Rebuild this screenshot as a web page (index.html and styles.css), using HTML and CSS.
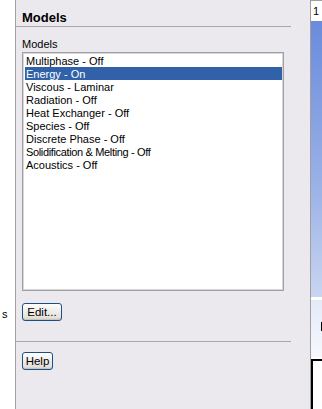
FILE: index.html
```html
<!DOCTYPE html>
<html lang="en">
<head>
  <meta charset="UTF-8">
  <title>Models</title>
  <link rel="stylesheet" href="styles.css">
</head>
<body>
  <div class="side-label">s</div>

  <!-- Models task panel -->
  <div class="panel">
    <h1 class="panel-title">Models</h1>
    <div class="panel-body">
      <div class="field-label">Models</div>
      <ul class="listbox">
        <li>Multiphase - Off</li>
        <li class="selected">Energy - On</li>
        <li>Viscous - Laminar</li>
        <li>Radiation - Off</li>
        <li>Heat Exchanger - Off</li>
        <li>Species - Off</li>
        <li>Discrete Phase - Off</li>
        <li class="tight">Solidification &amp; Melting - Off</li>
        <li>Acoustics - Off</li>
      </ul>
      <button class="xp-button edit-btn">Edit...</button>
    </div>
    <div class="separator"></div>
    <div class="panel-body">
      <button class="xp-button help-btn">Help</button>
    </div>
  </div>

  <!-- edge of the graphics window -->
  <div class="graphics">
    <div class="tab">1</div>
    <div class="sky"></div>
    <div class="legend"><span class="tick"></span></div>
    <div class="viewport"></div>
  </div>
</body>
</html>
```

FILE: styles.css
```css
body {
  margin: 0;
  width: 322px;
  height: 409px;
  overflow: hidden;
  display: flex;
  background: #fff;
  font-family: "Liberation Sans", Arial, sans-serif;
  font-size: 11px;
  color: #000;
}
.side-label {
  width: 15px;
  flex: none;
  box-sizing: border-box;
  padding: 308px 0 0 2px;
  line-height: 13px;
  overflow: hidden;
}
.panel {
  width: 295px;
  flex: none;
  box-sizing: border-box;
  border-left: 1px solid #a0a0a0;
  background: #ebe9ed;
}
.panel-title {
  margin: 0 19px 0 0;
  padding: 10px 0 0 6px;
  font-size: 13px;
  line-height: 16px;
  font-weight: bold;
  border-bottom: 1px solid #a7a6aa;
}
.panel-body {
  padding-left: 6px;
}
.field-label {
  margin-top: 10px;
  padding-top: 1px;
  line-height: 13px;
}
.listbox {
  list-style: none;
  margin: 1px 0 0 0;
  padding: 1px;
  width: 262px;
  height: 239px;
  box-sizing: border-box;
  border: 1px solid #a0a0a0;
  box-shadow: inset 0 0 0 1px #d6d5da;
  background: #fff;
}
.listbox li {
  margin-left: 1px;
  height: 13px;
  box-sizing: border-box;
  padding: 1px 0 0 1px;
  line-height: 13px;
  white-space: nowrap;
}
.listbox li.selected {
  background: #3161a9;
  color: #fff;
}
.listbox li.tight {
  letter-spacing: -0.35px;
}
.xp-button {
  display: block;
  height: 18px;
  padding: 0;
  box-sizing: border-box;
  border: 1px solid #1c4f86;
  border-radius: 3px;
  background: linear-gradient(#ffffff, #f1f0ec 40%, #e3e1da 85%, #cfcbc0);
  box-shadow: inset 0 -1px 0 #c9c5ba;
  font-family: "Liberation Sans", Arial, sans-serif;
  font-size: 11.5px;
  line-height: 15px;
  color: #000;
}
.edit-btn {
  margin-top: 12px;
  width: 40px;
}
.help-btn {
  margin-top: 10px;
  width: 31px;
}
.separator {
  margin: 20px 19px 0 0;
  border-top: 1px solid #a7a6aa;
}
.graphics {
  flex: none;
  width: 12px;
  border-left: 1px solid #a0a0a0;
  display: flex;
  flex-direction: column;
}
.tab {
  height: 21px;
  box-sizing: border-box;
  padding: 4px 0 0 2px;
  line-height: 13px;
  background: #fff;
  border-top: 1px solid #a0a0a0;
}
.sky {
  height: 276px;
  background: linear-gradient(#6a8bdc, #9bb2e6 60%, #c9d5f1);
}
.legend {
  height: 60px;
  box-sizing: border-box;
  border-top: 3px solid #fff;
  background: linear-gradient(#e4eaf8, #f6f8fd);
  padding-top: 22px;
}
.tick {
  display: block;
  margin-left: 10px;
  width: 2px;
  height: 9px;
  background: #000;
}
.viewport {
  flex: 1;
  margin-top: 2px;
  border-top: 2px solid #000;
  border-left: 2px solid #000;
  background: #fff;
}
```
